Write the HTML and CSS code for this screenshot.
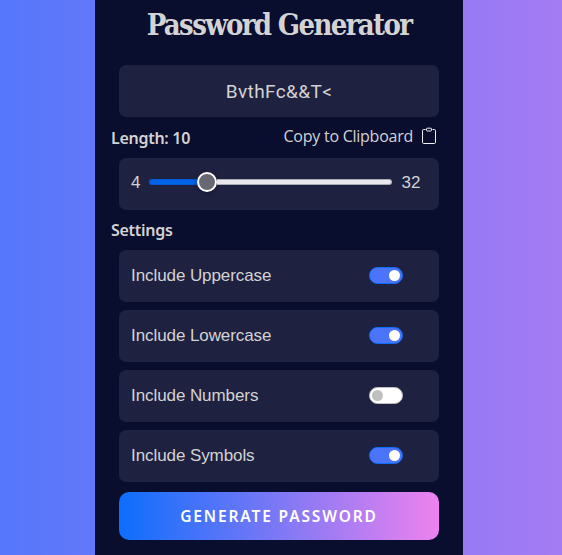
FILE: index.html
```html
<!DOCTYPE html>
<html lang="en">
<head>
<meta charset="utf-8">
<title>Password Generator</title>
<link rel="stylesheet" href="styles.css">
</head>
<body>
<main class="panel">
  <h1 class="title">Password Generator</h1>
  <div class="box password">BvthFc&amp;&amp;T&lt;</div>
  <div class="info">
    <span class="label">Length: 10</span>
    <span class="copy"><span class="copy-text">Copy to Clipboard</span>
      <svg class="clip" width="16" height="18" viewBox="0 0 16 18" fill="none" stroke="#f2f2f4">
        <path d="M4.5 2.5H2.7Q1.5 2.5 1.5 3.7V15.3Q1.5 16.5 2.7 16.5H13.3Q14.5 16.5 14.5 15.3V3.7Q14.5 2.5 13.3 2.5H11.5"/>
        <rect x="5.5" y="1.2" width="5" height="2.8" rx="0.7"/>
      </svg>
    </span>
  </div>
  <div class="box range">
    <span class="bound">4</span>
    <div class="track"><div class="fill"></div><div class="thumb"></div><div class="rest"></div></div>
    <span class="bound">32</span>
  </div>
  <h2 class="label settings">Settings</h2>
  <div class="options">
    <div class="box option"><span>Include Uppercase</span><span class="switch on"></span></div>
    <div class="box option"><span>Include Lowercase</span><span class="switch on"></span></div>
    <div class="box option"><span>Include Numbers</span><span class="switch"></span></div>
    <div class="box option"><span>Include Symbols</span><span class="switch on"></span></div>
  </div>
  <button class="generate">GENERATE PASSWORD</button>
</main>
</body>
</html>
```
FILE: styles.css
```css
* { box-sizing: border-box; }
body {
  margin: 0;
  height: 555px;
  overflow: hidden;
  background: linear-gradient(90deg, #5577fb, #a47bf3);
  font-family: "Liberation Sans", Arial, sans-serif;
  color: #d3d3d3;
}
.panel {
  width: 368px;
  height: 555px;
  margin-left: 95px;
  padding: 0 24px;
  background: #090d2e;
}
.title {
  margin: 0;
  height: 65px;
  padding-top: 4px;
  font: bold 29px/42px "DejaVu Serif Condensed", "DejaVu Serif", serif;
  font-stretch: condensed;
  letter-spacing: -1.65px;
  text-align: center;
  white-space: nowrap;
}
.box {
  height: 52px;
  border-radius: 7px;
  background: #1e2140;
}
.password {
  font: 19px/53px Roboto, sans-serif;
  letter-spacing: 0.4px;
  text-align: center;
}
.info {
  display: flex;
  justify-content: space-between;
  height: 41px;
  margin-left: -8px;
}
.label {
  font: 600 16px/24px "Noto Sans", sans-serif;
  letter-spacing: -0.28px;
}
.info .label { padding-top: 9px; }
.copy {
  display: flex;
  gap: 8px;
  height: 24px;
  margin: 7px 2px 0 0;
}
.copy-text {
  font: 16px/24px "Open Sans", sans-serif;
  letter-spacing: -0.25px;
  white-space: nowrap;
}
.clip { margin-top: 3px; }
.range {
  display: flex;
  align-items: center;
  padding: 0 12px 4px;
  gap: 9px;
  font-size: 17px;
}
.bound { padding-top: 2px; }
.track { display: flex; align-items: center; width: 243px; height: 20px; }
.fill {
  width: 48px;
  height: 6px;
  border: 1px solid #0259d3;
  border-right: 0;
  border-radius: 3px 0 0 3px;
  background: #0262e8;
}
.thumb {
  width: 20px;
  height: 20px;
  border: 2px solid #fff;
  border-radius: 50%;
  background: #686875;
  box-shadow: 0 1px 4px #0b0d2280;
}
.rest {
  flex: 1;
  height: 6px;
  border: 1px solid #aaaab5;
  border-left: 0;
  border-radius: 0 3px 3px 0;
  background: #e9e9ed;
}
.settings { margin: 0 0 0 -8px; height: 40px; padding-top: 8px; }
.options { display: grid; gap: 8px; }
.option {
  display: flex;
  align-items: center;
  justify-content: space-between;
  padding: 0 36px 1px 12px;
  font-size: 17px;
  letter-spacing: -0.08px;
}
.switch {
  display: flex;
  align-items: center;
  width: 34px;
  height: 17px;
  padding: 0 2px;
  border: 1px solid #bfbfbf;
  border-radius: 9px;
  background: #fff;
}
.switch::before {
  content: "";
  width: 11px;
  height: 11px;
  border-radius: 50%;
  background: #bfbfbf;
}
.switch.on {
  justify-content: flex-end;
  border-color: #0d6efd;
  background: #4b74fa;
}
.switch.on::before { background: #fff; }
.generate {
  display: block;
  width: 320px;
  height: 48px;
  margin-top: 10px;
  padding: 0;
  border: 0;
  border-radius: 10px;
  background: linear-gradient(90deg, #0d6efd, #ee82ee);
  color: #fff;
  font: 600 15.5px/48px "Noto Sans", sans-serif;
  letter-spacing: 1.85px;
}
```
